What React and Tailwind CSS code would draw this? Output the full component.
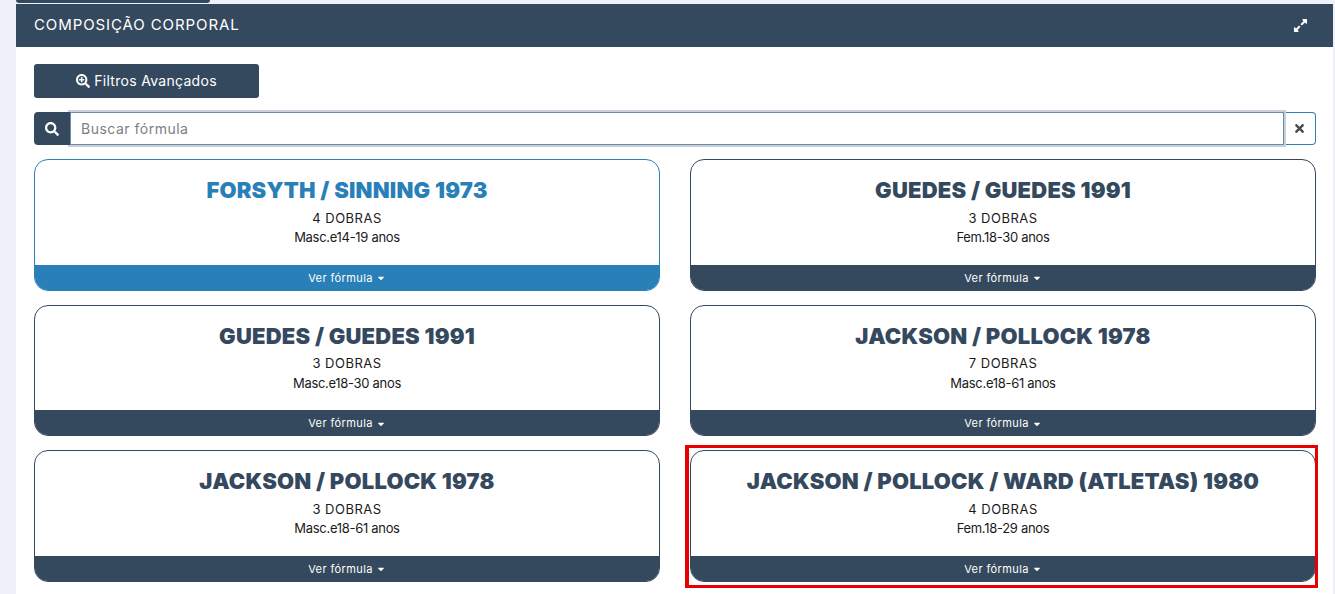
import React from "react";
import { FaSearch, FaSearchPlus, FaTimes, FaExpandAlt, FaCaretDown } from "react-icons/fa";

const formulas = [
	{ title: "FORSYTH / SINNING 1973", folds: "4 DOBRAS", group: "Masc.e14-19 anos", active: true },
	{ title: "GUEDES / GUEDES 1991", folds: "3 DOBRAS", group: "Fem.18-30 anos" },
	{ title: "GUEDES / GUEDES 1991", folds: "3 DOBRAS", group: "Masc.e18-30 anos" },
	{ title: "JACKSON / POLLOCK 1978", folds: "7 DOBRAS", group: "Masc.e18-61 anos" },
	{ title: "JACKSON / POLLOCK 1978", folds: "3 DOBRAS", group: "Masc.e18-61 anos" },
	{ title: "JACKSON / POLLOCK / WARD (ATLETAS) 1980", folds: "4 DOBRAS", group: "Fem.18-29 anos", marked: true },
];

function FormulaCard({ title, folds, group, active, marked }) {
	return (
		<div className="relative">
			<div className={`h-[131.6px] flex flex-col overflow-hidden rounded-[14px] border bg-white ${active ? "border-[#2980b9]" : "border-[#34495e]"}`}>
				<div className="flex-1 flex flex-col items-center pt-[17px]">
					<h3 className={`text-[22px] leading-[26px] font-black tracking-[0.2px] whitespace-nowrap ${active ? "text-[#2980b9]" : "text-[#34495e]"}`}>
						{title}
					</h3>
					<p className="mt-[5.8px] text-[13px] leading-[19px] tracking-[0.5px] text-[#1a1a1a]">{folds}</p>
					<p className="mt-[0.3px] text-[13px] leading-[19px] tracking-[-0.3px] text-[#1a1a1a]">{group}</p>
				</div>
				<div className={`h-[25px] shrink-0 flex items-center justify-center gap-[3px] pt-[2px] text-[11px] tracking-[0.4px] text-white ${active ? "bg-[#2980b9]" : "bg-[#34495e]"}`}>
					Ver fórmula
					<FaCaretDown className="w-[10px] h-[10px]" />
				</div>
			</div>
			{marked && (
				<div className="absolute -left-[5px] -right-[2px] -top-[5px] -bottom-[6px] border-[3px] border-l-[4px] border-[#e60000] pointer-events-none" />
			)}
		</div>
	);
}

export default function App() {
	return (
		<div className="h-[594px] overflow-hidden bg-[#eef1f8] pl-4 pr-[2px] font-['Inter',sans-serif]">
			<div className="w-[194px] h-[3px] bg-[#34495e] rounded-b-[3px]" />
			<div className="mt-px bg-white h-[590px]">
				<div className="h-[43px] bg-[#34495e] flex items-center justify-between pl-[18px] pr-[25px] text-white">
					<span className="text-[15px] tracking-[0.9px]">COMPOSIÇÃO CORPORAL</span>
					<FaExpandAlt className="w-[15px] h-[15px]" />
				</div>
				<div className="pt-[17px] pl-[18px] pr-[17px]">
					<button className="w-[225px] h-[34px] pb-px rounded-[3px] bg-[#34495e] text-white text-[14px] tracking-[0.3px] flex items-center justify-center gap-[4px]">
						<FaSearchPlus className="w-[14px] h-[14px]" />
						Filtros Avançados
					</button>
					<div className="mt-[14px] flex h-[33px]">
						<div className="relative z-20 w-[36px] bg-[#34495e] rounded-l-[4px] flex items-center justify-center text-white">
							<FaSearch className="w-[14px] h-[14px]" />
						</div>
						<input
							placeholder="Buscar fórmula"
							className="relative z-10 flex-1 min-w-0 border border-[#6b8bab] px-[10px] text-[14px] tracking-[0.5px] text-[#34495e] placeholder:text-[#7a7f86] outline-solid outline-[2px] outline-[#c9d0d9]"
						/>
						<div className="w-[32px] border border-l-0 border-[#2980b9] rounded-r-[4px] flex items-center justify-center text-[#444c55]">
							<FaTimes className="w-[13px] h-[13px]" />
						</div>
					</div>
					<div className="mt-[14px] grid grid-cols-2 gap-x-[30px] gap-y-[14px]">
						{formulas.map((f, i) => (
							<FormulaCard key={i} {...f} />
						))}
					</div>
				</div>
			</div>
		</div>
	);
}
